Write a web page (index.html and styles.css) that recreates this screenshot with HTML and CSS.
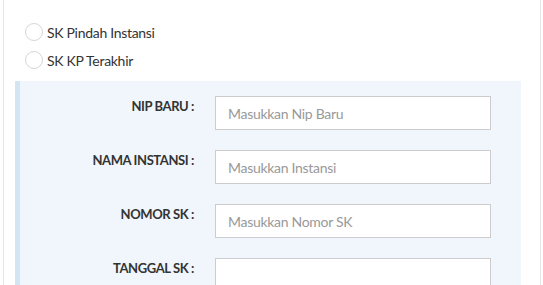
FILE: index.html
```html
<!DOCTYPE html>
<html lang="en">
<head>
  <meta charset="UTF-8">
  <title>Form SK</title>
  <link rel="stylesheet" href="styles.css">
</head>
<body>
  <div class="panel">
    <!-- pilihan jenis SK -->
    <div class="radio-list">
      <label class="radio-item"><span class="radio-dot"></span>SK Pindah Instansi</label>
      <label class="radio-item"><span class="radio-dot"></span>SK KP Terakhir</label>
    </div>

    <!-- form detail -->
    <div class="form-box">
      <div class="form-row">
        <label class="form-label">NIP BARU :</label>
        <input class="form-input" type="text" placeholder="Masukkan Nip Baru">
      </div>
      <div class="form-row">
        <label class="form-label">NAMA INSTANSI :</label>
        <input class="form-input" type="text" placeholder="Masukkan Instansi">
      </div>
      <div class="form-row">
        <label class="form-label">NOMOR SK :</label>
        <input class="form-input" type="text" placeholder="Masukkan Nomor SK">
      </div>
      <div class="form-row">
        <label class="form-label">TANGGAL SK :</label>
        <input class="form-input" type="text">
      </div>
    </div>
  </div>
</body>
</html>
```

FILE: styles.css
```css
body {
  margin: 0;
  padding: 0;
  background: #fff;
  color: #333;
  font-family: Lato, 'Liberation Sans', sans-serif;
  font-size: 14px;
  overflow: hidden;
}

.panel {
  margin: 0 2px 0 3px;
  height: 100vh;
  border-left: 1px solid #e6e6e6;
  border-right: 1px solid #e6e6e6;
  padding: 18px 19px 0 11px;
  box-sizing: border-box;
}

.radio-list {
  padding-left: 10px;
}

.radio-item {
  display: flex;
  align-items: center;
  height: 28px;
  color: #333;
  font-size: 14px;
  letter-spacing: -0.3px;
}

.radio-dot {
  width: 16px;
  height: 16px;
  border: 1px solid #d6d6d6;
  border-radius: 50%;
  background: #fff;
  margin-right: 4px;
}

.form-box {
  margin-top: 7px;
  background: #f0f6fc;
  border-left: 5px solid #d3e4f2;
  padding: 15px 30px 0 0;
}

.form-row {
  display: flex;
  margin-bottom: 20px;
}

.form-label {
  width: 195px;
  box-sizing: border-box;
  padding: 2px 21px 0 0;
  text-align: right;
  font-weight: bold;
  font-size: 13px;
  letter-spacing: -0.4px;
  color: #333;
}

.form-input {
  flex: 1;
  height: 34px;
  box-sizing: border-box;
  border: 1px solid #ccc;
  background: #fff;
  padding: 0 12px;
  font-family: inherit;
  font-size: 14px;
  letter-spacing: -0.3px;
  color: #555;
  outline: none;
}

.form-input::placeholder {
  color: #999;
}
```
